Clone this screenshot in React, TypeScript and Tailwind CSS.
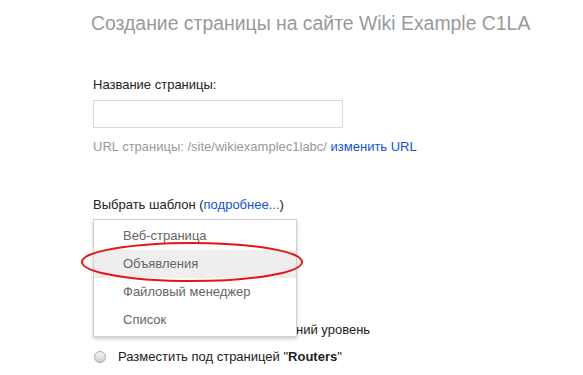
export default function App() {
  const items = ["Веб-страница", "Объявления", "Файловый менеджер", "Список"];
  return (
    <main className="relative w-[583px] h-[375px] overflow-hidden bg-white font-['Liberation_Sans',Arial,sans-serif] text-[13px] leading-4 text-[#222]">
      <div className="pl-[91px] pt-[11px]">
        <h1 className="text-[19.4px] leading-6 text-[#999]">Создание страницы на сайте Wiki Example C1LA</h1>

        <div className="pl-[2px] mt-[42px]">
          <label className="block">Название страницы:</label>
          <input className="block mt-[7px] w-[250px] h-[28px] border border-[#d9d9d9] outline-none" />
          <p className="mt-[11px] text-[#999]">
            URL страницы: /site/wikiexamplec1labc/ <span className="text-[#15c]">изменить URL</span>
          </p>

          <p className="mt-[42px]">
            Выбрать шаблон (<span className="text-[#15c]">подробнее...</span>)
          </p>

          <div className="mt-[109px] flex items-center gap-3">
            <span className="w-[12px] h-[12px] ml-[1px] rounded-full border border-[#aaa] bg-gradient-to-b from-[#f4f4f4] to-[#cfcfcf]" />
            <span>Разместить страницу на верхний уровень</span>
          </div>
          <div className="mt-[11px] flex items-center gap-3">
            <span className="w-[12px] h-[12px] ml-[1px] rounded-full border border-[#aaa] bg-gradient-to-b from-[#f4f4f4] to-[#cfcfcf]" />
            <span>
              Разместить под страницей "<b>Routers</b>"
            </span>
          </div>
        </div>
      </div>

      {/* dropdown menu */}
      <ul className="absolute left-[93px] top-[219px] w-[204px] py-[2px] bg-white border border-[#d0d0d0] shadow-[0_2px_4px_rgba(0,0,0,0.2)]">
        {items.map((item, i) => (
          <li
            key={item}
            className={`h-[28px] pl-[29px] flex items-center text-[#666] ${i === 1 ? "bg-[#eee]" : ""}`}
          >
            {item}
          </li>
        ))}
      </ul>

      {/* red highlight */}
      <svg className="absolute left-0 top-0" width="583" height="375">
        <ellipse cx="192" cy="262" rx="110" ry="19" fill="none" stroke="#e8141b" strokeWidth="2" />
      </svg>
    </main>
  );
}
